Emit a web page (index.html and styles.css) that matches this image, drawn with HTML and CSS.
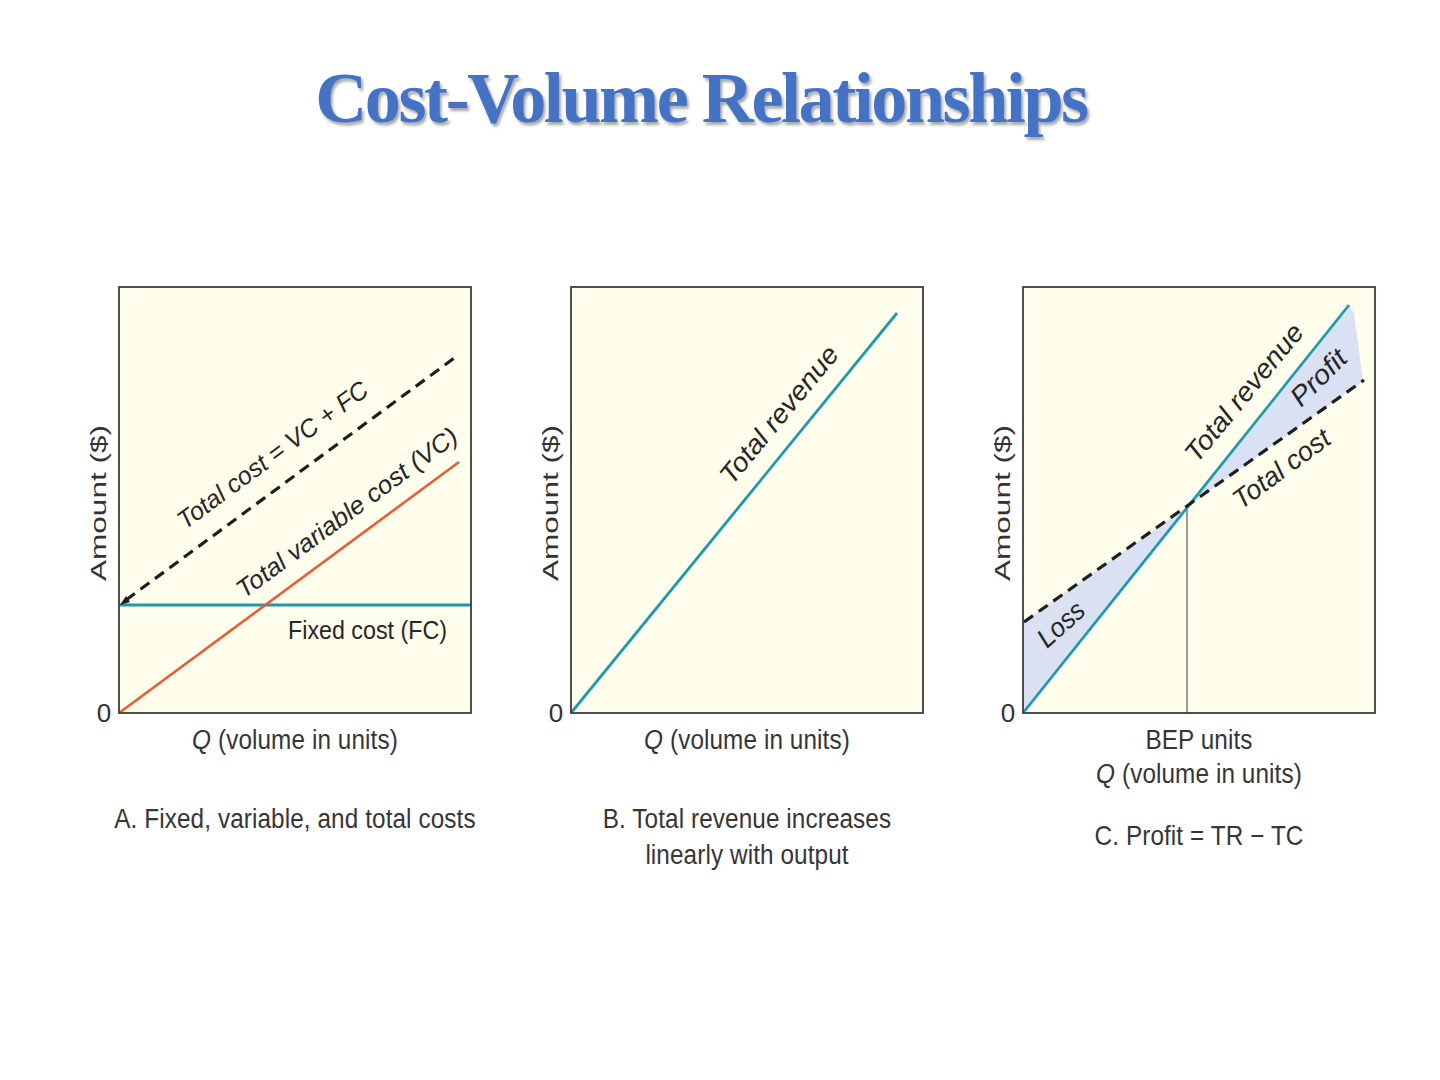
FILE: index.html
```html
<!DOCTYPE html>
<html lang="en">
<head>
<meta charset="utf-8">
<title>Cost-Volume Relationships</title>
<link rel="stylesheet" href="styles.css">
</head>
<body>
<main class="slide">
  <h1 class="title">Cost-Volume Relationships</h1>
  <section class="charts">
    <figure class="panel">
      <svg class="chart" width="412" height="437" viewBox="0 0 412 437">
        <rect class="plot" x="40" y="0" width="352" height="426"/>
        <line class="fc" x1="40" y1="318" x2="392" y2="318"/>
        <line class="vc" x1="40" y1="426" x2="380" y2="175"/>
        <line class="tc" x1="47" y1="313" x2="378" y2="69"/>
        <path class="arrow" d="M41 318 L47 309 L51 315 Z"/>
        <rect class="frame" x="40" y="0" width="352" height="426"/>
        <text class="lbl lbl-a" transform="translate(106,243) rotate(-36.4)" textLength="230" lengthAdjust="spacingAndGlyphs">Total cost = VC + FC</text>
        <text class="lbl lbl-a" transform="translate(165,312) rotate(-36.4)" textLength="268" lengthAdjust="spacingAndGlyphs">Total variable cost (VC)</text>
        <text class="plain" x="209" y="352" textLength="159" lengthAdjust="spacingAndGlyphs">Fixed cost (FC)</text>
        <text class="amount" transform="translate(19,216) rotate(-90)" textLength="156" lengthAdjust="spacingAndGlyphs">Amount ($)</text>
        <text class="zero" x="25" y="435">0</text>
      </svg>
      <div class="axis-label"><i>Q</i> (volume in units)</div>
      <figcaption class="caption">A. Fixed, variable, and total costs</figcaption>
    </figure>

    <figure class="panel">
      <svg class="chart" width="412" height="437" viewBox="0 0 412 437">
        <rect class="plot" x="40" y="0" width="352" height="426"/>
        <line class="tr" x1="40" y1="426" x2="366" y2="26"/>
        <rect class="frame" x="40" y="0" width="352" height="426"/>
        <text class="lbl lbl-b" transform="translate(201,199) rotate(-50.5)" textLength="170" lengthAdjust="spacingAndGlyphs">Total revenue</text>
        <text class="amount" transform="translate(19,216) rotate(-90)" textLength="156" lengthAdjust="spacingAndGlyphs">Amount ($)</text>
        <text class="zero" x="25" y="435">0</text>
      </svg>
      <div class="axis-label"><i>Q</i> (volume in units)</div>
      <figcaption class="caption">B. Total revenue increases<br>linearly with output</figcaption>
    </figure>

    <figure class="panel">
      <svg class="chart" width="412" height="437" viewBox="0 0 412 437">
        <rect class="plot" x="40" y="0" width="352" height="426"/>
        <polygon class="shade" points="40,426 40,335 204,220"/>
        <polygon class="shade" points="204,220 366,18 371,26 380,94"/>
        <line class="bep" x1="204" y1="220" x2="204" y2="426"/>
        <line class="tr" x1="40" y1="426" x2="366" y2="18"/>
        <line class="tc" x1="41" y1="335" x2="381" y2="93"/>
        <rect class="frame" x="40" y="0" width="352" height="426"/>
        <text class="lbl lbl-b" transform="translate(214,177) rotate(-50.5)" textLength="170" lengthAdjust="spacingAndGlyphs">Total revenue</text>
        <text class="lbl lbl-b" transform="translate(318,121) rotate(-45)" textLength="68" lengthAdjust="spacingAndGlyphs">Profit</text>
        <text class="lbl lbl-b" transform="translate(258,223) rotate(-36.5)" textLength="114" lengthAdjust="spacingAndGlyphs">Total cost</text>
        <text class="lbl lbl-b" transform="translate(64,362) rotate(-42)" textLength="54" lengthAdjust="spacingAndGlyphs">Loss</text>
        <text class="amount" transform="translate(19,216) rotate(-90)" textLength="156" lengthAdjust="spacingAndGlyphs">Amount ($)</text>
        <text class="zero" x="25" y="435">0</text>
      </svg>
      <div class="axis-label axis-label-c">BEP units<br><i>Q</i> (volume in units)</div>
      <figcaption class="caption caption-c">C. Profit = TR &minus; TC</figcaption>
    </figure>
  </section>
</main>
</body>
</html>
```

FILE: styles.css
```css
html, body {
  margin: 0;
  padding: 0;
  background: #ffffff;
}

.slide {
  width: 1440px;
  height: 1080px;
  overflow: hidden;
}

.title {
  margin: 0;
  padding: 58px 38px 0 0;
  height: 80px;
  line-height: 80px;
  text-align: center;
  font-family: "Liberation Serif", "DejaVu Serif", serif;
  font-weight: bold;
  font-size: 72px;
  letter-spacing: -2.4px;
  color: #4472c4;
  text-shadow: 2px 3px 3px rgba(0, 0, 0, 0.35);
}

.charts {
  display: flex;
  margin-top: 149px;
  padding-left: 79px;
}

.panel {
  flex: 0 0 452px;
  margin: 0;
}

.chart {
  display: block;
  overflow: visible;
}

.plot {
  fill: #fffdeb;
}

.frame {
  fill: none;
  stroke: #3c3c3c;
  stroke-width: 1.8;
}

.fc {
  stroke: #2296ab;
  stroke-width: 3;
}

.vc {
  stroke: #e45f38;
  stroke-width: 2.6;
}

.tr {
  stroke: #1f99ae;
  stroke-width: 2.8;
}

.tc {
  stroke: #1e1e1e;
  stroke-width: 3.2;
  stroke-dasharray: 11 7;
}

.arrow {
  fill: #1e1e1e;
}

.shade {
  fill: #d9e1f2;
}

.bep {
  stroke: #555555;
  stroke-width: 1.2;
}

.lbl {
  font-family: "Liberation Sans", Arial, sans-serif;
  font-style: italic;
  fill: #262626;
}

.lbl-a {
  font-size: 25px;
}

.lbl-b {
  font-size: 27px;
}

.plain {
  font-family: "Liberation Sans", Arial, sans-serif;
  font-size: 26px;
  fill: #262626;
}

.amount {
  font-family: "Liberation Sans", Arial, sans-serif;
  font-size: 22px;
  fill: #333333;
  text-anchor: middle;
  dominant-baseline: central;
}

.zero {
  font-family: "Liberation Sans", Arial, sans-serif;
  font-size: 26px;
  fill: #333333;
  text-anchor: middle;
}

.axis-label,
.caption {
  margin-left: 16px;
  width: 400px;
  text-align: center;
  font-family: "Liberation Sans", Arial, sans-serif;
  font-size: 24.3px;
  letter-spacing: 0.1px;
  color: #363636;
  white-space: nowrap;
  transform: scaleY(1.15);
  transform-origin: top center;
}

.axis-label {
  line-height: 28.7px;
}

.axis-label i {
  font-style: italic;
}

.caption {
  margin-top: 47px;
  margin-bottom: 0;
  margin-right: 0;
  line-height: 32.2px;
}

.caption-c {
  margin-top: 36px;
}
```
